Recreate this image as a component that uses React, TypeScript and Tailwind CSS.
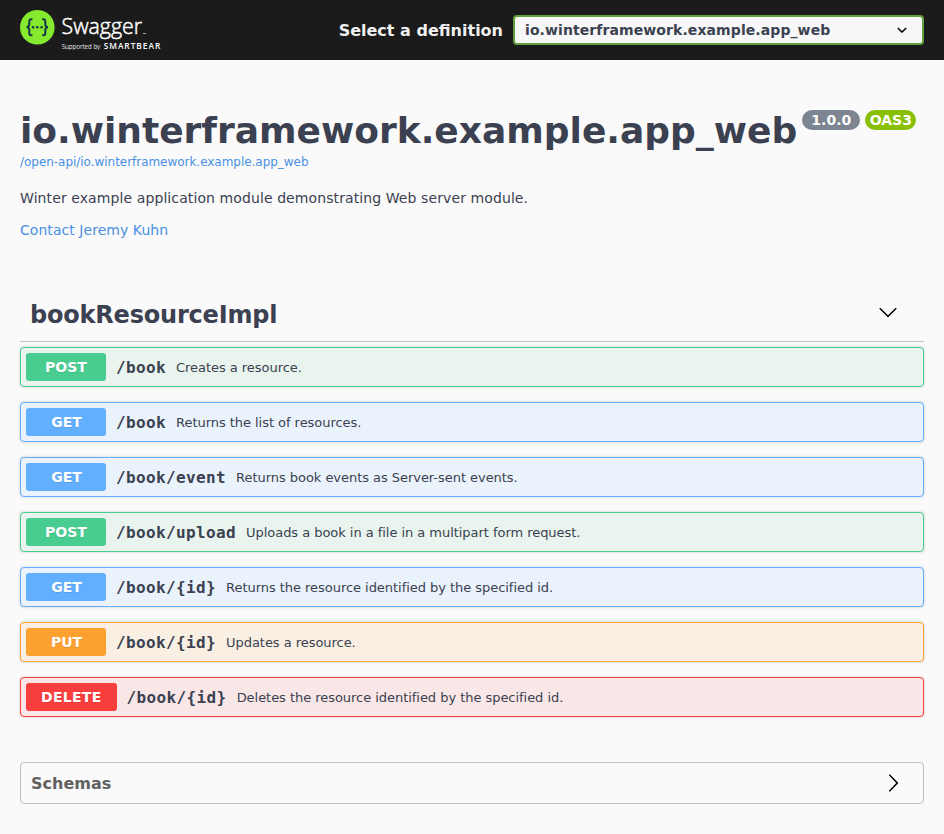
const ARROW_DOWN =
  'M17.418 6.109c.272-.268.709-.268.979 0s.271.701 0 .969l-7.908 7.83c-.27.268-.707.268-.979 0l-7.908-7.83c-.27-.268-.27-.701 0-.969.271-.268.709-.268.979 0L10 13.25l7.418-7.141z';
const ARROW_RIGHT =
  'M13.25 10L6.109 2.58c-.268-.27-.268-.707 0-.979.268-.27.701-.27.969 0l7.83 7.908c.268.271.268.709 0 .979l-7.83 7.908c-.268.271-.701.27-.969 0-.268-.269-.268-.707 0-.979L13.25 10z';
const SELECT_ARROW =
  'M13.418 7.859c.271-.268.709-.268.978 0 .27.268.272.701 0 .969l-3.908 3.83c-.27.268-.707.268-.979 0l-3.908-3.83c-.27-.267-.27-.701 0-.969.271-.268.709-.268.978 0L10 11l3.418-3.141z';

type Method = 'POST' | 'GET' | 'PUT' | 'DELETE';

const styles: Record<Method, { block: string; badge: string }> = {
  POST: { block: 'border-[#49cc90] bg-[#e8f4ed]', badge: 'bg-[#49cc90]' },
  GET: { block: 'border-[#61affe] bg-[#eaf2fc]', badge: 'bg-[#61affe] pl-[16px]' },
  PUT: { block: 'border-[#fca130] bg-[#f9f0e3]', badge: 'bg-[#fca130] pl-[16px]' },
  DELETE: { block: 'border-[#f93e3e] bg-[#f9e7e7]', badge: 'bg-[#f93e3e] tracking-[0.3px]' },
};

const operations: { method: Method; path: string; summary: string }[] = [
  { method: 'POST', path: '/book', summary: 'Creates a resource.' },
  { method: 'GET', path: '/book', summary: 'Returns the list of resources.' },
  { method: 'GET', path: '/book/event', summary: 'Returns book events as Server-sent events.' },
  { method: 'POST', path: '/book/upload', summary: 'Uploads a book in a file in a multipart form request.' },
  { method: 'GET', path: '/book/{id}', summary: 'Returns the resource identified by the specified id.' },
  { method: 'PUT', path: '/book/{id}', summary: 'Updates a resource.' },
  { method: 'DELETE', path: '/book/{id}', summary: 'Deletes the resource identified by the specified id.' },
];

function Icon({ d, className }: { d: string; className: string }) {
  return (
    <svg viewBox="0 0 20 20" className={className} fill="black">
      <path d={d} />
    </svg>
  );
}

function Logo() {
  return (
    <svg width="142" height="40" viewBox="0 0 142 40" className="shrink-0">
      <circle cx="17.3" cy="17.3" r="17.3" fill="#85ea2d" />
      <g fill="none" stroke="#173647" strokeWidth="2">
        <path d="M12.4 9.300h-1.100c-1.400 0-2 .8-2 2.100v2.900c0 1.700-.7 2.700-2.600 2.900 1.900.2 2.600 1.200 2.600 2.900v2.900c0 1.400.6 2.200 2 2.200h1.100" />
        <path d="M22.200 9.300h1.100c1.400 0 2 .8 2 2.100v2.900c0 1.700.7 2.700 2.600 2.900-1.900.2-2.600 1.200-2.600 2.900v2.900c0 1.400-.6 2.200-2 2.200h-1.100" />
      </g>
      <g fill="#173647">
        <circle cx="13" cy="17.2" r="1.25" />
        <circle cx="17.3" cy="17.2" r="1.25" />
        <circle cx="21.6" cy="17.2" r="1.25" />
      </g>
      <g fill="#fff">
        <text x="41.500" y="24" fontSize="22.500" textLength="80.500" lengthAdjust="spacingAndGlyphs" className="font-['Open_Sans',sans-serif] font-light" stroke="#fff" strokeWidth="0.5">
          Swagger
        </text>
        <rect x="123" y="23" width="3" height="1" opacity="0.6" />
        <text x="41.700" y="38.500" fontSize="6.200" textLength="38.500" lengthAdjust="spacingAndGlyphs" className="font-['Open_Sans',sans-serif]" opacity="0.9">
          Supported by
        </text>
        <text x="83.700" y="38.500" fontSize="8.300" textLength="56.500" lengthAdjust="spacing" className="font-['Open_Sans',sans-serif] font-semibold">
          SMARTBEAR
        </text>
      </g>
    </svg>
  );
}

export default function App() {
  return (
    <div className="min-h-[834px] bg-[#fafafa] font-['DejaVu_Sans',sans-serif] text-[#3b4151]">
      <header className="flex h-[60px] items-center justify-between bg-[#1b1b1b] px-5">
        <Logo />
        <div className="flex items-center">
          <span className="mr-[10px] pt-[2px] text-[16px] font-bold text-[#f0f0f0]">Select a definition</span>
          <div className="flex h-[30px] w-[411px] items-center justify-between rounded-[4px] border-2 border-[#62a03f] bg-[#f7f7f7] pr-[10px] pl-[10px] text-[14px] font-bold">
            <span className="tracking-[0.09px]">io.winterframework.example.app_web</span>
            <Icon d={SELECT_ARROW} className="size-5" />
          </div>
        </div>
      </header>

      <main className="px-5 pt-[50px]">
        <section className="h-[177px]">
          <div className="flex items-start whitespace-nowrap">
            <h1 className="text-[36px] leading-[42px] font-bold">io.winterframework.example.app_web</h1>
            <span className="ml-[5px] flex h-5 w-[58px] items-center justify-center rounded-full bg-[#7d8492] text-[14px] font-bold text-white">1.0.0</span>
            <span className="ml-[5px] flex h-5 w-[51px] items-center justify-center rounded-full bg-[#89bf04] text-[14px] font-bold text-white">OAS3</span>
          </div>
          <a className="block h-[20px] text-[12px] leading-[20px] tracking-[-0.035px] text-[#4990e2]">/open-api/io.winterframework.example.app_web</a>
          <p className="mt-[18px] text-[14px] leading-[16px] tracking-[0.095px]">Winter example application module demonstrating Web server module.</p>
          <a className="mt-4 block text-[14px] leading-[16px] tracking-[0.05px] text-[#4990e2]">Contact Jeremy Kuhn</a>
        </section>

        <section>
          <div className="flex h-[55px] items-center justify-between border-b border-[#3b4151]/30 pr-[26px] pl-[10px]">
            <h2 className="pt-[2px] text-[24px] leading-[28px] font-bold tracking-[-0.2px]">bookResourceImpl</h2>
            <Icon d={ARROW_DOWN} className="mb-[4px] size-5" />
          </div>
          <div className="mt-[5px] flex flex-col gap-[15px]">
            {operations.map((op) => (
              <div
                key={op.method + op.path}
                className={`flex h-10 items-center rounded-[4px] border px-[5px] shadow-[0_0_3px_rgba(0,0,0,0.19)] ${styles[op.method].block}`}
              >
                <span
                  className={`flex h-7 min-w-[80px] items-center justify-center rounded-[3px] px-[15px] text-[14px] font-bold text-white [text-shadow:0_1px_0_rgba(0,0,0,0.1)] ${styles[op.method].badge}`}
                >
                  {op.method}
                </span>
                <span className="px-[10px] pt-[2px] font-['DejaVu_Sans_Mono',monospace] text-[16px] font-bold tracking-[0.37px]">{op.path}</span>
                <span className="pt-[2px] text-[13px] tracking-[-0.04px]">{op.summary}</span>
              </div>
            ))}
          </div>
        </section>

        <section className="mt-[45px] flex h-[42px] items-center justify-between rounded-[4px] border border-[#3b4151]/30 pr-5 pl-[10px]">
          <h4 className="pt-[2px] text-[16px] font-bold text-[#606060]">Schemas</h4>
          <Icon d={ARROW_RIGHT} className="size-5" />
        </section>
      </main>
    </div>
  );
}
